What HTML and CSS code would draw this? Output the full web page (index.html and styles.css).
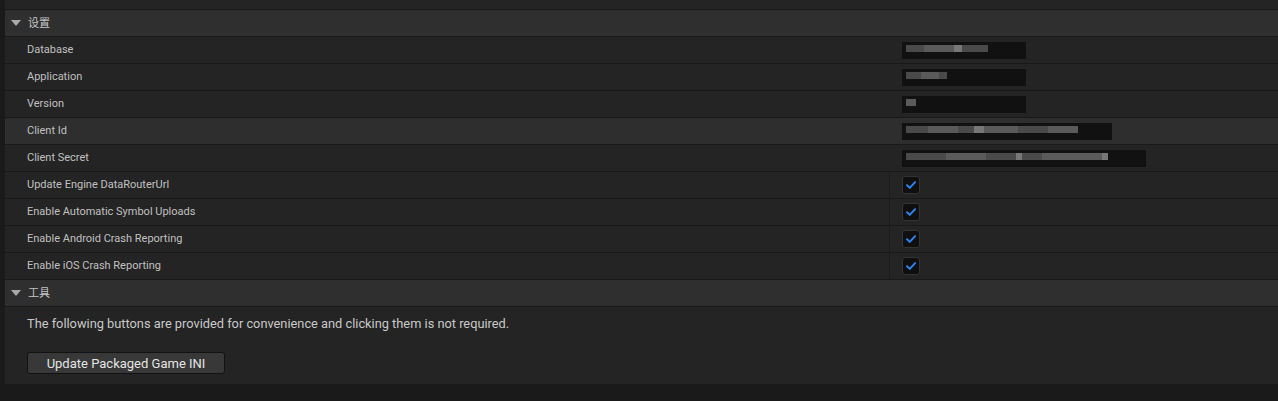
FILE: index.html
```html
<!DOCTYPE html>
<html>
<head>
<meta charset="utf-8">
<link rel="stylesheet" href="styles.css">
</head>
<body>
<div class="panel">
  <div class="stub"></div>
  <div class="header"><span class="caret"></span><span class="htext">设置</span></div>
  <div class="row"><div class="name">Database</div><div class="value nodiv"><div class="mask"><span class="b g1" style="width:18px"></span><span class="b g2" style="width:30px"></span><span class="b g3" style="width:8px"></span><span class="b g1" style="width:26px"></span><span class="b d" style="width:22px"></span></div></div></div>
  <div class="row"><div class="name">Application</div><div class="value nodiv"><div class="mask"><span class="b g1" style="width:16px"></span><span class="b g2" style="width:18px"></span><span class="b g1" style="width:8px"></span><span class="b d" style="width:82px"></span></div></div></div>
  <div class="row"><div class="name">Version</div><div class="value nodiv"><div class="mask"><span class="b g2" style="width:10px"></span><span class="b d" style="width:114px"></span></div></div></div>
  <div class="row hover"><div class="name">Client Id</div><div class="value nodiv"><div class="mask wide1"><span class="b g1" style="width:22px"></span><span class="b g2" style="width:30px"></span><span class="b g1" style="width:16px"></span><span class="b g3" style="width:10px"></span><span class="b g2" style="width:34px"></span><span class="b g1" style="width:30px"></span><span class="b g2" style="width:30px"></span><span class="b d" style="width:14px"></span></div></div></div>
  <div class="row"><div class="name">Client Secret</div><div class="value nodiv"><div class="mask wide2"><span class="b g1" style="width:40px"></span><span class="b g2" style="width:40px"></span><span class="b g1" style="width:30px"></span><span class="b g3" style="width:6px"></span><span class="b g1" style="width:20px"></span><span class="b g2" style="width:60px"></span><span class="b g3" style="width:6px"></span><span class="b d" style="width:10px"></span></div></div></div>
  <div class="row"><div class="name">Update Engine DataRouterUrl</div><div class="value"><span class="cb"><svg viewBox="0 0 18 18" width="18" height="18"><path d="M4.5 9.2 L7.6 12.2 L13.6 5.8" fill="none" stroke="#2a86f0" stroke-width="2.2" stroke-linecap="round" stroke-linejoin="round"/></svg></span></div></div>
  <div class="row"><div class="name">Enable Automatic Symbol Uploads</div><div class="value"><span class="cb"><svg viewBox="0 0 18 18" width="18" height="18"><path d="M4.5 9.2 L7.6 12.2 L13.6 5.8" fill="none" stroke="#2a86f0" stroke-width="2.2" stroke-linecap="round" stroke-linejoin="round"/></svg></span></div></div>
  <div class="row"><div class="name">Enable Android Crash Reporting</div><div class="value"><span class="cb"><svg viewBox="0 0 18 18" width="18" height="18"><path d="M4.5 9.2 L7.6 12.2 L13.6 5.8" fill="none" stroke="#2a86f0" stroke-width="2.2" stroke-linecap="round" stroke-linejoin="round"/></svg></span></div></div>
  <div class="row"><div class="name">Enable iOS Crash Reporting</div><div class="value"><span class="cb"><svg viewBox="0 0 18 18" width="18" height="18"><path d="M4.5 9.2 L7.6 12.2 L13.6 5.8" fill="none" stroke="#2a86f0" stroke-width="2.2" stroke-linecap="round" stroke-linejoin="round"/></svg></span></div></div>
  <div class="header"><span class="caret"></span><span class="htext">工具</span></div>
  <div class="tools">
    <p class="desc">The following buttons are provided for convenience and clicking them is not required.</p>
    <button class="btn">Update Packaged Game INI</button>
  </div>
</div>
</body>
</html>
```

FILE: styles.css
```css
* { box-sizing: border-box; }
html, body { margin: 0; padding: 0; }
body {
  background: #1a1a1a;
  width: 1278px;
  height: 401px;
  overflow: hidden;
  font-family: Roboto, "Noto Sans CJK SC", sans-serif;
}
.panel {
  margin-left: 5px;
  background: #242424;
}
.stub {
  height: 10px;
  border-bottom: 1px solid #191919;
}
.header {
  height: 27px;
  background: #2f2f2f;
  border-bottom: 1px solid #191919;
  display: flex;
  align-items: center;
  padding-left: 6px;
  padding-bottom: 2px;
}
.caret {
  width: 0; height: 0;
  border-left: 5px solid transparent;
  border-right: 5px solid transparent;
  border-top: 6px solid #a8a8a8;
  margin-right: 7px;
  margin-top: 2px;
}
.htext {
  font-size: 11px;
  color: #c4c4c4;
  font-family: "Noto Sans CJK SC", sans-serif;
}
.row {
  height: 27px;
  border-bottom: 1px solid #191919;
  display: flex;
  align-items: stretch;
}
.row.hover { background: #2e2e2e; }
.name {
  width: 884px;
  padding-left: 22px;
  padding-bottom: 2px;
  font-size: 11px;
  color: #c0c0c0;
  display: flex;
  align-items: center;
}
.value {
  flex: 1;
  border-left: 1px solid #1c1c1c;
  display: flex;
  align-items: center;
  padding-left: 12px;
}
.value.nodiv { border-left-color: transparent; }
.mask {
  width: 124px;
  height: 17px;
  background: #111;
  display: flex;
  align-items: flex-start;
  padding: 3px 0 0 4px;
  filter: blur(0.6px);
  margin-top: 1px;
}
.mask.wide1 { width: 210px; }
.mask.wide2 { width: 244px; }
.b { height: 7px; display: block; }
.g1 { background: #4a4a4a; }
.g2 { background: #5a5a5a; }
.g3 { background: #777; }
.d { background: #111; }
.cb {
  width: 18px; height: 18px;
  background: #0f0f0f;
  border: 1px solid #343434;
  border-radius: 3px;
  display: flex;
  align-items: center;
  justify-content: center;
}
.cb svg { display: block; width: 16px; height: 16px; }
.tools {
  height: 77px;
  padding: 9px 0 0 22px;
}
.desc {
  margin: 0;
  font-size: 12.8px;
  color: #c8c8c8;
  line-height: 16px;
}
.btn {
  margin-top: 20px;
  width: 198px;
  height: 22px;
  background: #383838;
  border: 1px solid #121212;
  border-radius: 3px;
  color: #e4e4e4;
  font-family: Roboto, sans-serif;
  font-size: 13px;
  padding: 0;
}
```
